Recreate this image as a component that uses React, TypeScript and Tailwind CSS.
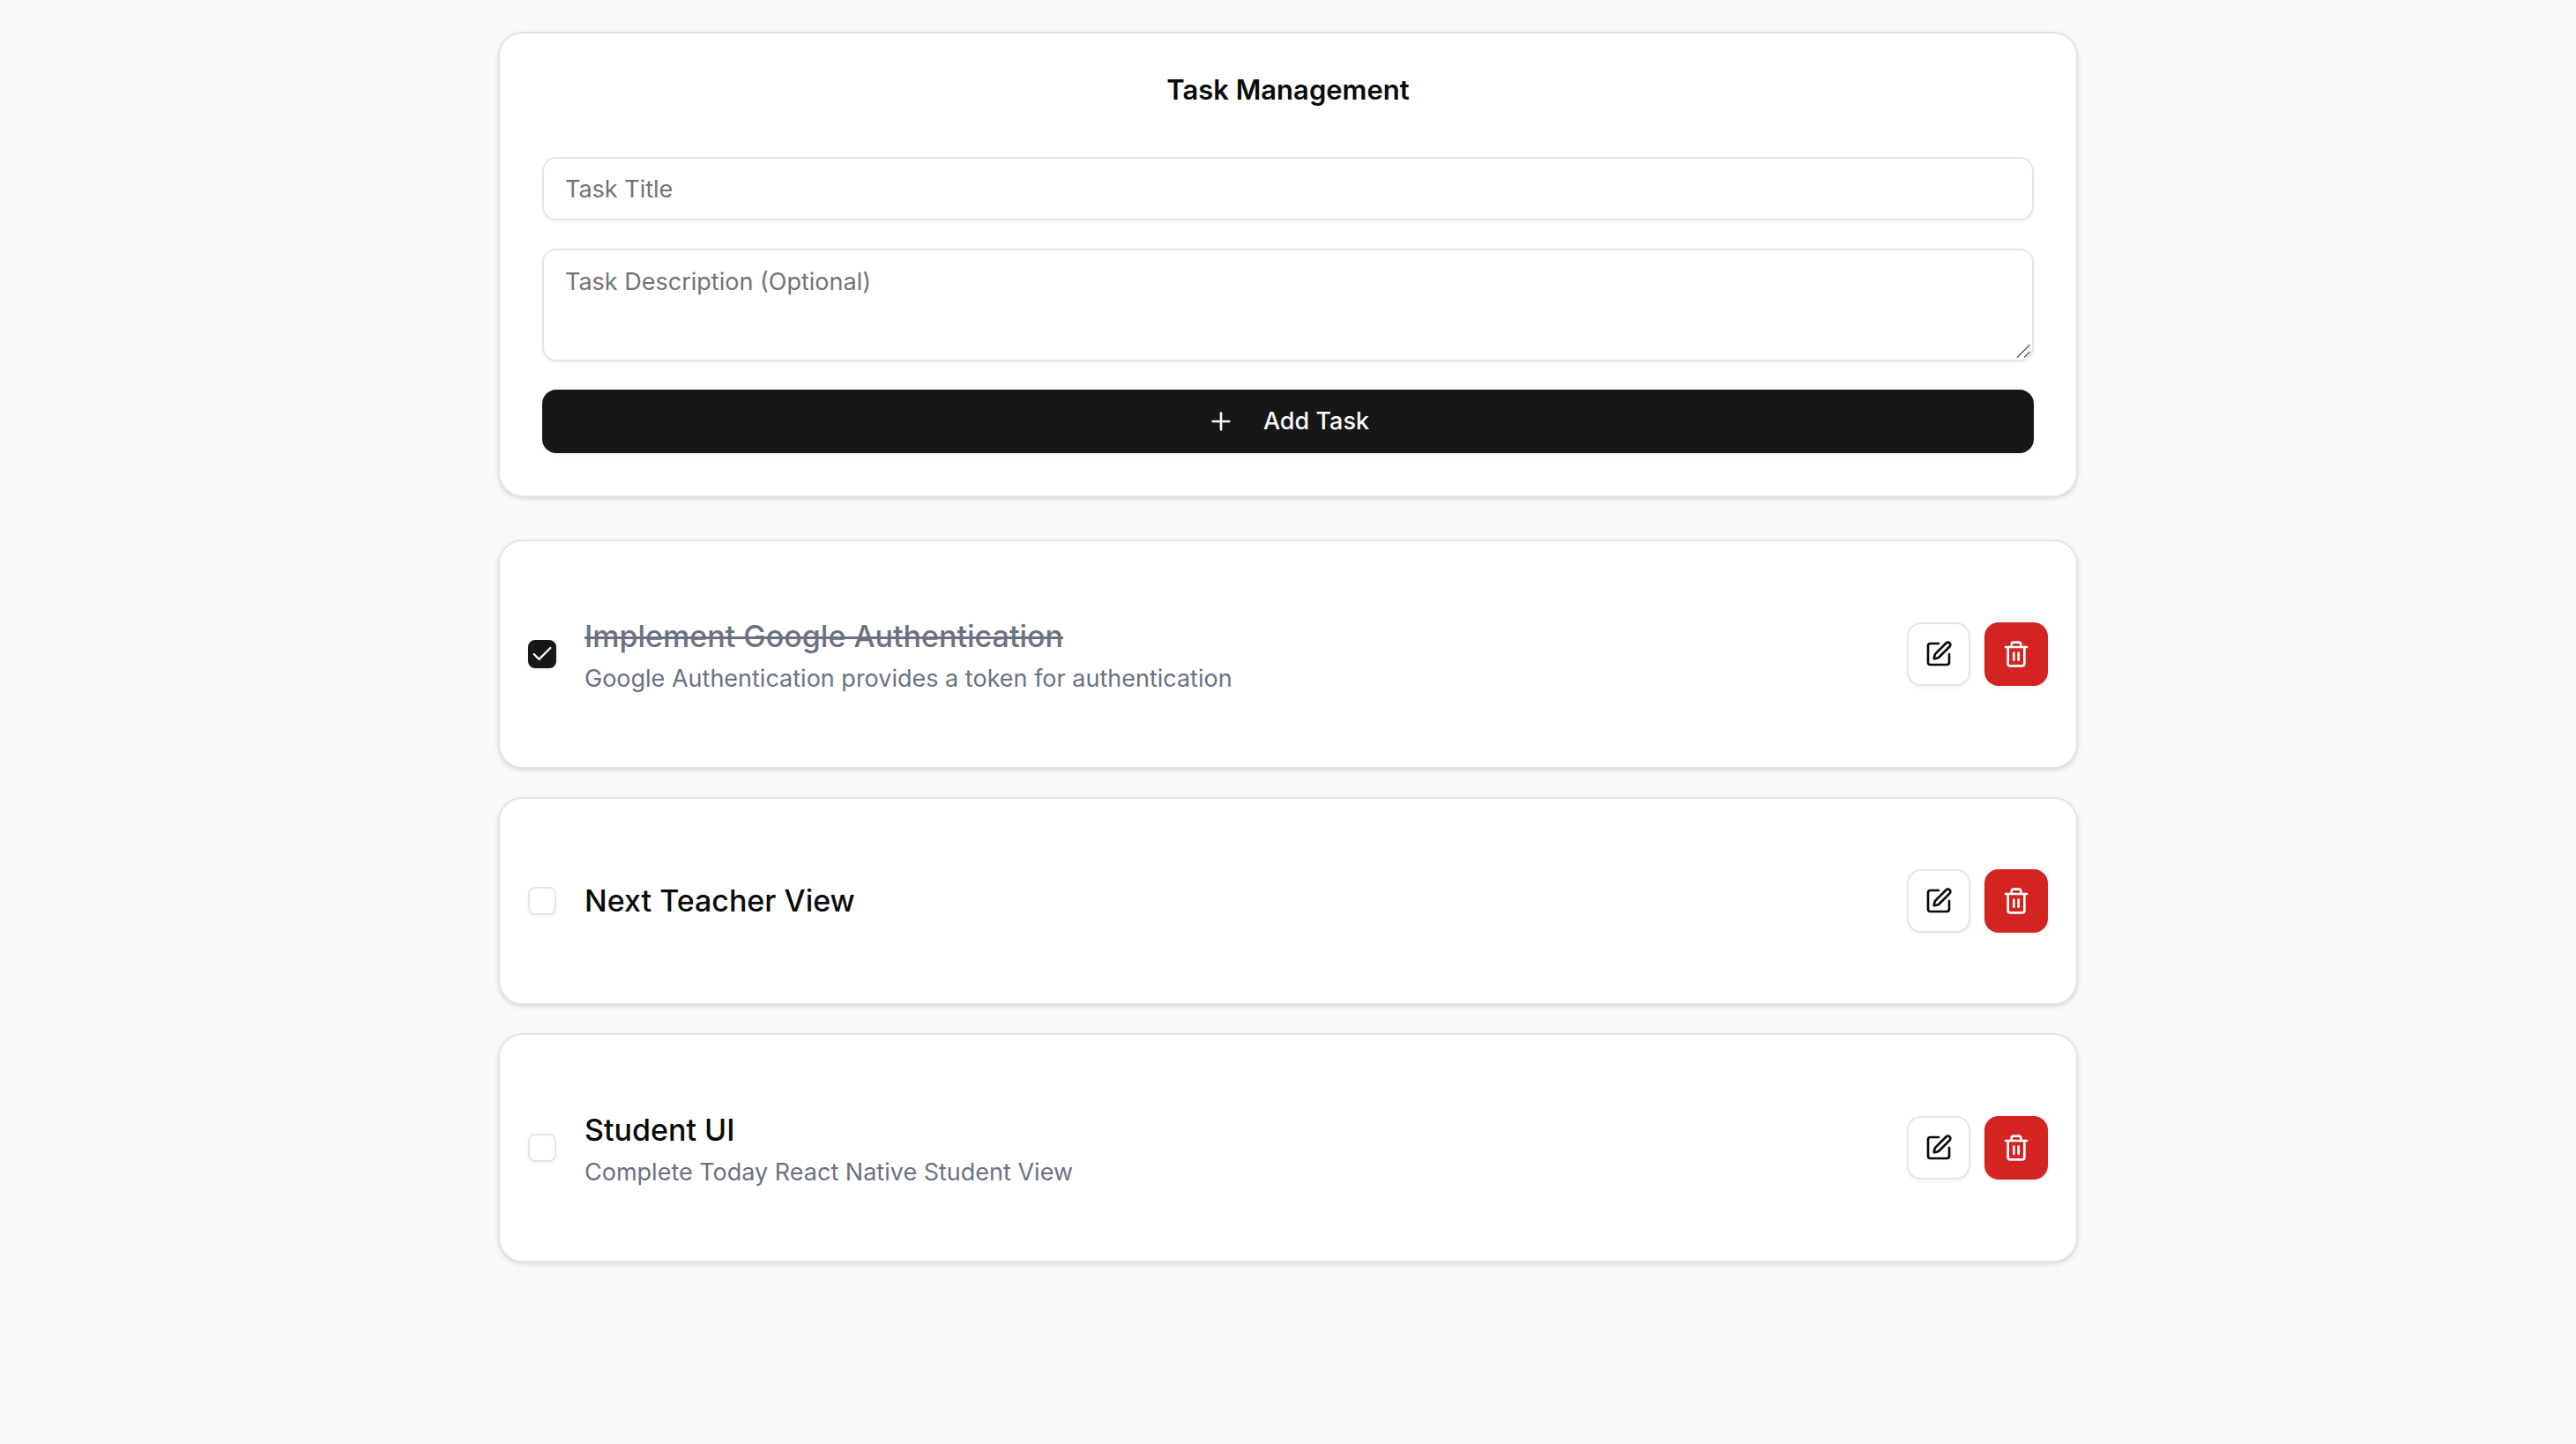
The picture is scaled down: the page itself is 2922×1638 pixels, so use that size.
import { useState } from "react";
import { Check, Plus, SquarePen, Trash2 } from "lucide-react";

type Task = {
  id: number;
  title: string;
  description?: string;
  done: boolean;
};

const initialTasks: Task[] = [
  {
    id: 1,
    title: "Implement Google Authentication",
    description: "Google Authentication provides a token for authentication",
    done: true,
  },
  { id: 2, title: "Next Teacher View", done: false },
  {
    id: 3,
    title: "Student UI",
    description: "Complete Today React Native Student View",
    done: false,
  },
];

const cardClass =
  "rounded-[28px] border-2 border-[#e5e5e5] bg-white py-12 shadow-[0_2px_6px_0_rgb(0_0_0/0.1),0_2px_4px_-2px_rgb(0_0_0/0.1)]";

const fieldClass =
  "block w-full rounded-2xl border-2 border-[#e5e5e5] bg-transparent px-6 text-[27px] leading-10 shadow-[0_2px_4px_0_rgb(0_0_0/0.05)] outline-none placeholder:text-[#737373] focus-visible:border-neutral-400";

function ResizeGrip() {
  return (
    <svg
      className="pointer-events-none absolute right-1 bottom-1 size-4"
      viewBox="0 0 16 16"
      fill="none"
      stroke="#5f5f5f"
      strokeWidth="1.5"
      aria-hidden="true"
    >
      <path d="M1 15.5 15.5 1M9 15.5l6.5-6.5" />
    </svg>
  );
}

function TaskForm({ onAdd }: { onAdd: (title: string, description: string) => void }) {
  const [title, setTitle] = useState("");
  const [description, setDescription] = useState("");

  return (
    <section className={cardClass}>
      <h1 className="px-12 text-center text-[31px] leading-8 font-semibold">Task Management</h1>
      <form
        className="mt-[60px] flex flex-col gap-8 px-12"
        onSubmit={(e) => {
          e.preventDefault();
          if (!title.trim()) return;
          onAdd(title.trim(), description.trim());
          setTitle("");
          setDescription("");
        }}
      >
        <input
          type="text"
          aria-label="Task Title"
          placeholder="Task Title"
          value={title}
          onChange={(e) => setTitle(e.target.value)}
          className={`h-18 py-2 ${fieldClass}`}
        />
        <div className="relative">
          <textarea
            aria-label="Task Description (Optional)"
            placeholder="Task Description (Optional)"
            value={description}
            onChange={(e) => setDescription(e.target.value)}
            className={`h-32 resize-none py-4 ${fieldClass}`}
          />
          <ResizeGrip />
        </div>
        <button
          type="submit"
          className="flex h-18 w-full items-center justify-center gap-8 rounded-2xl bg-[#171717] text-[27px] leading-10 font-medium text-[#fafafa] shadow-[0_2px_4px_0_rgb(0_0_0/0.05)]"
        >
          <Plus className="size-8" strokeWidth={2} aria-hidden="true" />
          Add Task
        </button>
      </form>
    </section>
  );
}

function TaskCard({
  task,
  onToggle,
  onDelete,
}: {
  task: Task;
  onToggle: () => void;
  onDelete: () => void;
}) {
  const inputId = `task-${task.id}`;
  return (
    <li className={cardClass}>
      <div className="flex items-center justify-between p-8">
        <div className="flex items-center gap-8">
          <span className="grid size-8 shrink-0 place-items-center">
            <input
              id={inputId}
              type="checkbox"
              checked={task.done}
              onChange={onToggle}
              className="col-start-1 row-start-1 size-8 appearance-none rounded-lg border-2 border-[#e5e5e5] shadow-[0_2px_4px_0_rgb(0_0_0/0.05)] checked:border-[#171717] checked:bg-[#171717]"
            />
            {task.done && (
              <Check
                className="pointer-events-none col-start-1 row-start-1 size-7 text-[#fafafa]"
                aria-hidden="true"
              />
            )}
          </span>
          <div>
            <label
              htmlFor={inputId}
              className={
                task.done
                  ? "block text-[34px] leading-14 font-medium text-[#6a7282] line-through decoration-3"
                  : "block text-[34px] leading-14 font-medium"
              }
            >
              {task.title}
            </label>
            {task.description && (
              <p className="text-[27px] leading-10 text-[#6a7282]">{task.description}</p>
            )}
          </div>
        </div>
        <div className="flex gap-4">
          <button
            type="button"
            aria-label={`Edit ${task.title}`}
            className="grid size-18 place-items-center rounded-2xl border-2 border-[#e5e5e5] bg-white shadow-[0_2px_4px_0_rgb(0_0_0/0.05)]"
          >
            <SquarePen className="size-8" aria-hidden="true" />
          </button>
          <button
            type="button"
            aria-label={`Delete ${task.title}`}
            onClick={onDelete}
            className="grid size-18 place-items-center rounded-2xl bg-[#d42422] text-white shadow-[0_2px_4px_0_rgb(0_0_0/0.05)]"
          >
            <Trash2 className="size-8" aria-hidden="true" />
          </button>
        </div>
      </div>
    </li>
  );
}

export default function App() {
  const [tasks, setTasks] = useState(initialTasks);

  return (
    <main className="min-h-screen bg-[#f9fafc] px-8 py-9 font-[Inter,sans-serif] text-[#0a0a0a]">
      <div className="mx-auto flex max-w-[1792px] flex-col gap-12">
        <TaskForm
          onAdd={(title, description) =>
            setTasks((list) => [...list, { id: Date.now(), title, description, done: false }])
          }
        />
        <ul className="flex flex-col gap-8">
          {tasks.map((task) => (
            <TaskCard
              key={task.id}
              task={task}
              onToggle={() =>
                setTasks((list) =>
                  list.map((t) => (t.id === task.id ? { ...t, done: !t.done } : t)),
                )
              }
              onDelete={() => setTasks((list) => list.filter((t) => t.id !== task.id))}
            />
          ))}
        </ul>
      </div>
    </main>
  );
}
